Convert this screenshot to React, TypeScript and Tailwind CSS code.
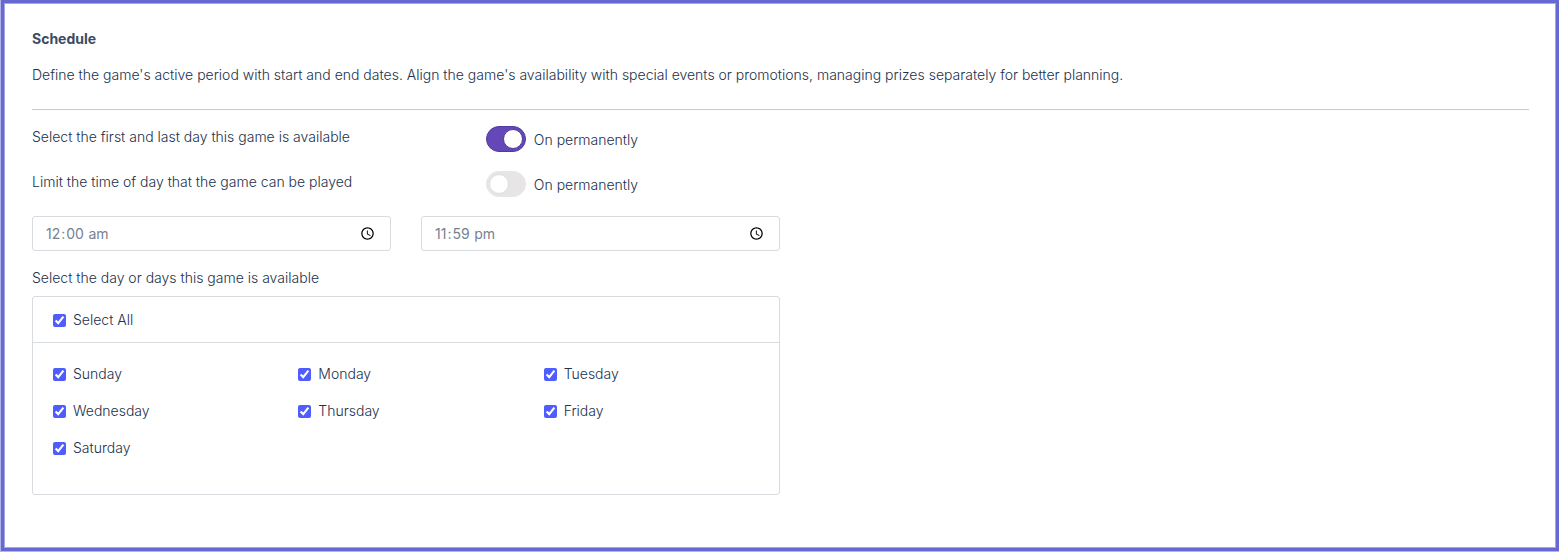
import { useState } from "react";

const DAYS = ["Sunday", "Monday", "Tuesday", "Wednesday", "Thursday", "Friday", "Saturday"];

type ToggleRowProps = {
  id: string;
  label: string;
  checked: boolean;
  onChange: (value: boolean) => void;
};

function ToggleRow({ id, label, checked, onChange }: ToggleRowProps) {
  return (
    <div className="grid grid-cols-12 gap-x-[30px]">
      <span id={id} className="col-span-7 pt-px">
        {label}
      </span>
      <div className="col-span-5 flex items-center gap-2">
        <button
          type="button"
          role="switch"
          aria-checked={checked}
          aria-labelledby={id}
          onClick={() => onChange(!checked)}
          className={
            checked
              ? "flex h-[26px] w-10 items-center justify-end rounded-full border border-[#523a9e] bg-[#6548b8] px-[2px]"
              : "flex h-[26px] w-10 items-center justify-start rounded-full border border-[#e7e5e6] bg-[#e7e5e6] px-[2px]"
          }
        >
          <span
            className={
              checked
                ? "size-5 rounded-full border border-[#523a9e] bg-white"
                : "size-5 rounded-full border border-[#dadde3] bg-white"
            }
          />
        </button>
        <span className="pt-[2px]">On permanently</span>
      </div>
    </div>
  );
}

function TimeField({ label, initial }: { label: string; initial: string }) {
  const [value, setValue] = useState(initial);
  return (
    <input
      type="time"
      aria-label={label}
      value={value}
      onChange={(e) => setValue(e.target.value)}
      className="h-[35px] w-full rounded-[3px] border border-[#d8dbe0] bg-white px-3 font-normal lowercase text-[#768192] [&::-webkit-calendar-picker-indicator]:opacity-100"
    />
  );
}

type DayCheckProps = {
  label: string;
  checked: boolean;
  onChange: (value: boolean) => void;
};

function DayCheck({ label, checked, onChange }: DayCheckProps) {
  return (
    <label className="flex items-center gap-[7px]">
      <input
        type="checkbox"
        checked={checked}
        onChange={(e) => onChange(e.target.checked)}
        className="size-[13px] accent-[#4f5dff]"
      />
      {label}
    </label>
  );
}

export default function App() {
  const [permanent, setPermanent] = useState(true);
  const [limited, setLimited] = useState(false);
  const [days, setDays] = useState<string[]>(DAYS);

  const setDay = (day: string, on: boolean) =>
    setDays((prev) => (on ? [...prev, day] : prev.filter((d) => d !== day)));

  return (
    <div className="flex min-h-screen border-b border-l border-[#b1b3e6] bg-white">
      <div className="flex grow border-3 border-[#666ad0]">
        <main className="grow border border-[#a3a6e2] pt-[25px] pr-[26px] pb-[51px] pl-[27px] font-['Inter',sans-serif] text-[14px] leading-5 font-light text-[#22314d]">
          <h1 className="font-bold text-[#3c4b64]">Schedule</h1>
          <p className="mt-4">
            Define the game's active period with start and end dates. Align the game's availability with special events
            or promotions, managing prizes separately for better planning.
          </p>
          <hr className="mt-6 border-[#c8c9cc]" />

          <div className="w-1/2 max-w-[748px] pt-4">
            <div className="space-y-[19px]">
              <ToggleRow
                id="available-dates"
                label="Select the first and last day this game is available"
                checked={permanent}
                onChange={setPermanent}
              />
              <ToggleRow
                id="time-limit"
                label="Limit the time of day that the game can be played"
                checked={limited}
                onChange={setLimited}
              />
            </div>

            <div className="mt-[19px] grid grid-cols-2 gap-[30px]">
              <TimeField label="Start time" initial="00:00" />
              <TimeField label="End time" initial="23:59" />
            </div>

            <h2 id="days-label" className="mt-[17px]">
              Select the day or days this game is available
            </h2>
            <section aria-labelledby="days-label" className="mt-2 rounded-[3px] border border-[#d8dbe0]">
              <div className="border-b border-[#d8dbe0] px-5 pt-[13px] pb-3">
                <DayCheck
                  label="Select All"
                  checked={days.length === DAYS.length}
                  onChange={(on) => setDays(on ? DAYS : [])}
                />
              </div>
              <div className="grid grid-cols-3 gap-x-[30px] gap-y-[17px] px-5 pt-[21px] pb-9">
                {DAYS.map((day) => (
                  <DayCheck key={day} label={day} checked={days.includes(day)} onChange={(on) => setDay(day, on)} />
                ))}
              </div>
            </section>
          </div>
        </main>
      </div>
    </div>
  );
}
